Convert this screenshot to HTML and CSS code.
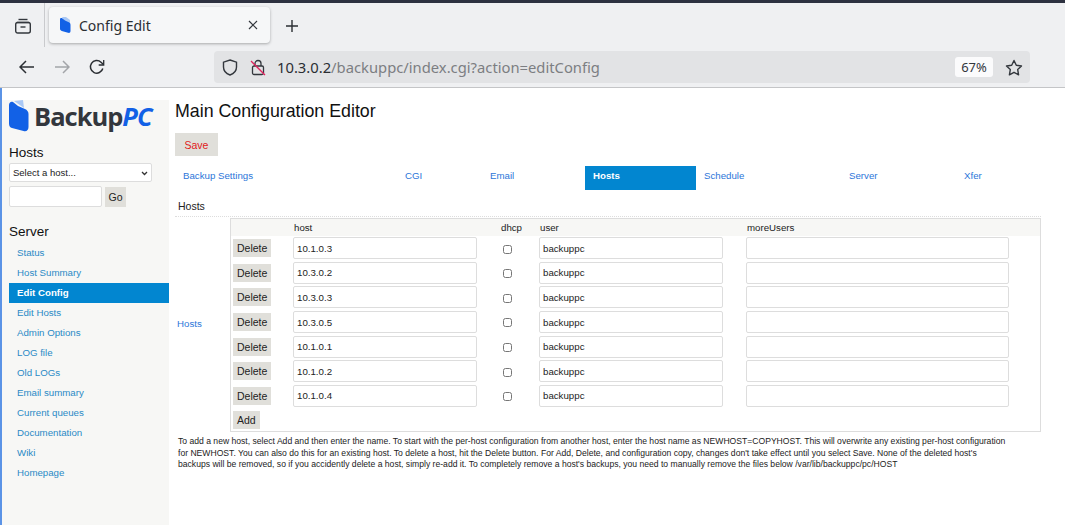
FILE: index.html
```html
<!DOCTYPE html>
<html lang="en-US">
  <head>
    <meta charset="utf-8"/>
    <title>Config Edit</title>
    <link rel="stylesheet" href="styles.css">
  </head>

  <body>
    <div class="window">
      <div class="tabstrip">
        <div class="tabs-menu">
          <svg width="18" height="18" viewBox="0 0 18 18" fill="none" stroke="#33373d" stroke-width="1.4"><path d="M4.5 2.5h9"/><path d="M2.8 5.5h12.4"/><rect x="1.7" y="5.5" width="14.6" height="10.5" rx="2"/><path d="M6.5 10h5"/></svg>
        </div>
        <div class="tab">
          <svg class="tab-icon" width="11" height="16" viewBox="0 0 11 16"><path d="M2 0h4l4 3v12z" fill="#a9c8f5"/><path d="M0 2.5C0 1 1.500 .8 2.500 1.500L5 3.400 8.800 5.200C10 5.800 10.500 6.500 10.500 8v6c0 1.500-1 2.200-2.500 1.800L1.800 14C.6 13.600 0 12.800 0 11.500z" fill="#1261e6"/></svg>
          <span class="tab-title">Config Edit</span>
          <svg class="tab-close" width="10" height="10" viewBox="0 0 10 10" stroke="#33373d" stroke-width="1.2"><path d="M1 1l8 8M9 1l-8 8"/></svg>
        </div>
        <svg class="new-tab" width="14" height="14" viewBox="0 0 14 14" stroke="#2b2e33" stroke-width="1.4"><path d="M7 1v12M1 7h12"/></svg>
      </div>

      <div class="navbar">
        <svg class="nav-btn" width="16" height="14" viewBox="0 0 16 14" fill="none" stroke="#2b2e33" stroke-width="1.5"><path d="M15 7H1.500M7 1L1 7l6 6"/></svg>
        <svg class="nav-btn" width="16" height="14" viewBox="0 0 16 14" fill="none" stroke="#a3a5a9" stroke-width="1.5"><path d="M1 7h13.500M9 1l6 6-6 6"/></svg>
        <svg class="nav-btn" width="16" height="16" viewBox="0 0 16 16" fill="none" stroke="#2b2e33" stroke-width="1.5"><path d="M13.800 9.500A6.300 6.300 0 1 1 12 3.200L14.500 5.500"/><path d="M14.700 1v5h-5" stroke-width="1.300"/></svg>
        <div class="urlbar">
          <svg width="16" height="17" viewBox="0 0 16 17" fill="none" stroke="#33373d" stroke-width="1.4"><path d="M8 1l6.500 2.200v4.800c0 4-3 6.800-6.500 8C4.500 14.800 1.500 12 1.500 8V3.200z"/></svg>
          <svg class="lock" width="16" height="17" viewBox="0 0 16 17" fill="none" stroke="#33373d" stroke-width="1.3"><rect x="2.500" y="7" width="11" height="8.500" rx="1.500"/><path d="M5 7V4.500a3 3 0 0 1 6 0V7"/><path d="M1 2l14 14" stroke="#e0245e"/></svg>
          <span class="url"><span class="url-host">10.3.0.2</span>/backuppc/index.cgi?action=editConfig</span>
          <span class="zoom-level">67%</span>
          <svg class="star" width="18" height="17" viewBox="0 0 18 17" fill="none" stroke="#33373d" stroke-width="1.4" stroke-linejoin="round"><path d="M9 1.500l2.300 4.800 5.200.7-3.800 3.600.9 5.200L9 13.300l-4.600 2.500.9-5.200L1.500 7l5.200-.7z"/></svg>
        </div>
      </div>

      <div class="page">
        <aside class="sidebar">
          <div class="logo">
            <svg width="20" height="32" viewBox="0 0 20 32"><path d="M5 1l9-1 1 8z" fill="#a9c8f5"/><path d="M0 5c0-2.500 2-4 4-3l5 4 7 3c2 1 3.500 2.500 3.500 5v13c0 3-2 5-5 4L3 28c-2-.6-3-2-3-4.500z" fill="#1261e6"/></svg>
            <span class="logo-text">Backup<em>PC</em></span>
          </div>

          <h3>Hosts</h3>
          <div class="select-wrap">
            <select class="host-select">
              <option>Select a host...</option>
            </select>
            <svg class="select-arrow" width="7" height="5" viewBox="0 0 7 5" fill="none" stroke="#333" stroke-width="1.300"><path d="M1 1l2.500 2.500L6 1"/></svg>
          </div>
          <div class="host-go">
            <input type="text" class="host-input">
            <button class="btn">Go</button>
          </div>

          <h3 class="server-head">Server</h3>
          <ul class="side-nav">
            <li><a href="#">Status</a></li>
            <li><a href="#">Host Summary</a></li>
            <li><a href="#" class="current">Edit Config</a></li>
            <li><a href="#">Edit Hosts</a></li>
            <li><a href="#">Admin Options</a></li>
            <li><a href="#">LOG file</a></li>
            <li><a href="#">Old LOGs</a></li>
            <li><a href="#">Email summary</a></li>
            <li><a href="#">Current queues</a></li>
            <li><a href="#">Documentation</a></li>
            <li><a href="#">Wiki</a></li>
            <li><a href="#">Homepage</a></li>
          </ul>
        </aside>

        <main class="content">
          <h1>Main Configuration Editor</h1>
          <button class="btn save">Save</button>

          <nav class="config-tabs">
            <a href="#">Backup Settings</a>
            <a href="#">CGI</a>
            <a href="#">Email</a>
            <a href="#" class="active">Hosts</a>
            <a href="#">Schedule</a>
            <a href="#">Server</a>
            <a href="#">Xfer</a>
          </nav>

          <div class="section-head">Hosts</div>

          <div class="hosts-row">
            <a href="#" class="hosts-label">Hosts</a>
            <table class="hosts-table">
              <thead>
                <tr><th class="col-del"></th><th class="col-host">host</th><th class="col-dhcp">dhcp</th><th class="col-user">user</th><th>moreUsers</th></tr>
              </thead>
              <tbody>
                <tr><td><button class="btn">Delete</button></td><td><input type="text" class="host-field" value="10.1.0.3"></td><td class="check"><input type="checkbox"></td><td><input type="text" class="user-field" value="backuppc"></td><td><input type="text" class="more-field"></td></tr>
                <tr><td><button class="btn">Delete</button></td><td><input type="text" class="host-field" value="10.3.0.2"></td><td class="check"><input type="checkbox"></td><td><input type="text" class="user-field" value="backuppc"></td><td><input type="text" class="more-field"></td></tr>
                <tr><td><button class="btn">Delete</button></td><td><input type="text" class="host-field" value="10.3.0.3"></td><td class="check"><input type="checkbox"></td><td><input type="text" class="user-field" value="backuppc"></td><td><input type="text" class="more-field"></td></tr>
                <tr><td><button class="btn">Delete</button></td><td><input type="text" class="host-field" value="10.3.0.5"></td><td class="check"><input type="checkbox"></td><td><input type="text" class="user-field" value="backuppc"></td><td><input type="text" class="more-field"></td></tr>
                <tr><td><button class="btn">Delete</button></td><td><input type="text" class="host-field" value="10.1.0.1"></td><td class="check"><input type="checkbox"></td><td><input type="text" class="user-field" value="backuppc"></td><td><input type="text" class="more-field"></td></tr>
                <tr><td><button class="btn">Delete</button></td><td><input type="text" class="host-field" value="10.1.0.2"></td><td class="check"><input type="checkbox"></td><td><input type="text" class="user-field" value="backuppc"></td><td><input type="text" class="more-field"></td></tr>
                <tr><td><button class="btn">Delete</button></td><td><input type="text" class="host-field" value="10.1.0.4"></td><td class="check"><input type="checkbox"></td><td><input type="text" class="user-field" value="backuppc"></td><td><input type="text" class="more-field"></td></tr>
                <tr class="add-row"><td colspan="5"><button class="btn">Add</button></td></tr>
              </tbody>
            </table>
          </div>

          <p class="help">To add a new host, select Add and then enter the name. To start with the per-host configuration from another host, enter the host name as NEWHOST=COPYHOST. This will overwrite any existing per-host configuration for NEWHOST. You can also do this for an existing host. To delete a host, hit the Delete button. For Add, Delete, and configuration copy, changes don't take effect until you select Save. None of the deleted host's backups will be removed, so if you accidently delete a host, simply re-add it. To completely remove a host's backups, you need to manually remove the files below /var/lib/backuppc/pc/HOST</p>
        </main>
      </div>
    </div>
  </body>
</html>
```

FILE: styles.css
```css
* {
  box-sizing: border-box;
}

html, body {
  margin: 0;
  height: 100%;
  overflow: hidden;
}

body {
  font: 10px "Liberation Sans", Arial, sans-serif;
  color: #222;
  background: #fff;
}

.window {
  height: 525px;
  border-left: 2px solid #5b93e6;
  display: flex;
  flex-direction: column;
}

/* browser chrome */
.tabstrip {
  height: 47px;
  flex: none;
  background: #eff0f2;
  border-top: 3px solid #2d3140;
  margin-left: -2px;
  padding-left: 2px;
  display: flex;
  align-items: center;
}

.tabs-menu {
  width: 43px;
  height: 44px;
  border-right: 1px solid #c9cacd;
  display: flex;
  align-items: center;
  padding: 1px 0 0 12px;
}

.tab {
  width: 221px;
  height: 36px;
  margin-left: 4px;
  background: #f6f7f8;
  border-radius: 4px;
  box-shadow: 0 1px 3px rgba(0,0,0,.3);
  display: flex;
  align-items: center;
  padding-left: 11px;
}

.tab-title {
  font: 14px "Noto Sans", "Open Sans", sans-serif;
  color: #2b2e33;
  margin-left: 8px;
  flex: 1;
}

.tab-close {
  margin-right: 12px;
}

.new-tab {
  margin: 1px 0 0 15px;
}

.navbar {
  height: 41px;
  flex: none;
  background: #eff0f2;
  border-bottom: 1px solid #c4c5c7;
  margin-left: -2px;
  padding-left: 2px;
  display: flex;
  align-items: center;
}

.nav-btn {
  margin-left: 17px;
}

.nav-btn + .nav-btn {
  margin-left: 19px;
}

.urlbar {
  width: 816px;
  height: 32px;
  background: #e2e3e5;
  border-radius: 4px;
  display: flex;
  align-items: center;
  padding-left: 8px;
  margin-left: 109px;
}

.lock {
  margin-left: 12px;
}

.url {
  font: 14.770px "Noto Sans", "Open Sans", sans-serif;
  color: #7c7e82;
  margin-left: 11px;
  flex: 1;
}

.url-host {
  color: #2b2e33;
}

.zoom-level {
  font: 13px "Noto Sans", "Open Sans", sans-serif;
  color: #33373d;
  background: #fbfbfc;
  border-radius: 3px;
  width: 38px;
  height: 20px;
  line-height: 20px;
  text-align: center;
}

.star {
  margin: 0 7px 0 12px;
}

/* backuppc page */
.page {
  flex: 1;
  display: flex;
  padding-top: 12px;
  align-items: stretch;
}

.sidebar {
  width: 167px;
  flex: none;
  background: #f7f7f5;
  padding-left: 7px;
}

.logo {
  display: flex;
  align-items: center;
  height: 32px;
  gap: 5px;
}

.logo-text {
  font: 700 25.500px "Open Sans", "Noto Sans", sans-serif;
  letter-spacing: -1px;
  color: #33373d;
}

.logo-text em {
  color: #1261e6;
  font-style: italic;
}

.sidebar h3 {
  font-size: 13.500px;
  font-weight: normal;
  color: #111;
  margin: 13px 0 3px;
}

.select-wrap {
  position: relative;
  width: 143px;
}

.host-select {
  display: block;
  width: 143px;
  height: 19px;
  margin-top: 1px;
  padding-left: 3px;
  appearance: none;
  font: 9.500px "Liberation Sans", Arial, sans-serif;
  border: 1px solid #ddd;
  border-radius: 2px;
  background-color: #fff;
  color: #222;
}

.select-arrow {
  position: absolute;
  right: 4px;
  top: 8px;
}

.host-go {
  display: flex;
  align-items: center;
  gap: 3px;
  margin-top: 4px;
}

.host-input {
  width: 93px;
  height: 21px;
  border: 1px solid #ddd;
  border-radius: 2px;
}

.btn {
  font: 10.500px "Liberation Sans", Arial, sans-serif;
  background: #e0dfda;
  border: 0;
  color: #222;
  padding: 0 4px;
  height: 18px;
  cursor: pointer;
}

.host-go .btn {
  width: 21px;
  height: 20px;
  padding: 0;
}

.sidebar .server-head {
  margin: 17px 0 4px;
}

.side-nav {
  list-style: none;
  margin: 0;
  padding: 0;
}

.side-nav a {
  display: block;
  height: 20px;
  line-height: 20px;
  padding-left: 8px;
  color: #2a8ac6;
  font-size: 9.700px;
  text-decoration: none;
}

.side-nav a.current {
  background: #0286d0;
  color: #fff;
  font-weight: bold;
}

.content {
  flex: 1;
  padding: 0 24px 0 6px;
  min-width: 0;
}

.content h1 {
  font-size: 17.800px;
  font-weight: normal;
  color: #111;
  margin: 0 0 11px;
  line-height: 22px;
}

.save {
  display: block;
  color: #e02020;
  width: 43px;
  height: 23px;
  padding: 0;
}

.config-tabs {
  display: grid;
  grid-template-columns: 222px 85px 103px 111px 145px 115px 85px;
  height: 24px;
  margin-top: 10px;
}

.config-tabs a {
  padding: 4px 8px;
  color: #2c76d9;
  font-size: 9.700px;
  text-decoration: none;
}

.config-tabs a.active {
  background: #0286d0;
  color: #fff;
  font-weight: bold;
}

.section-head {
  font-size: 10.500px;
  margin-top: 10px;
  padding: 0 3px 3px;
  height: 17px;
  border-bottom: 1px dotted #ddd;
}

.hosts-row {
  display: flex;
  align-items: center;
  margin-top: 1px;
}

.hosts-label {
  width: 55px;
  flex: none;
  padding: 0 0 3px 2px;
  color: #2c76d9;
  font-size: 9.700px;
  text-decoration: none;
}

.hosts-table {
  width: 811px;
  border: 1px solid #ddd;
  border-collapse: separate;
  border-spacing: 0;
  table-layout: fixed;
}

.hosts-table th {
  background: #f7f7f5;
  font-size: 9.700px;
  font-weight: normal;
  text-align: left;
  height: 17px;
  padding: 0 0 0 2px;
}

.hosts-table th.col-dhcp {
  padding-left: 1px;
}

.col-del { width: 61px; }
.col-host { width: 208px; }
.col-dhcp { width: 38px; }
.col-user { width: 207px; }

.hosts-table td {
  height: 24.600px;
  padding: 0 0 0 1px;
}

.hosts-table td:first-child {
  padding-left: 2px;
}

.hosts-table .add-row td {
  height: 23px;
}

.hosts-table td.check {
  text-align: center;
  padding-right: 25px;
}

.hosts-table input[type="checkbox"] {
  width: 9px;
  height: 9px;
  margin: 0;
  vertical-align: middle;
}

.hosts-table input[type="text"] {
  display: block;
  height: 22px;
  border: 1px solid #ddd;
  border-radius: 2px;
  font: 9.700px "Liberation Sans", Arial, sans-serif;
  color: #222;
  padding: 0 3px;
}

.host-field { width: 184px; }
.user-field { width: 184px; }
.more-field { width: 263px; }

.help {
  font-size: 8.610px;
  line-height: 11.500px;
  color: #222;
  margin: 4px 32px 0 3px;
}
```
